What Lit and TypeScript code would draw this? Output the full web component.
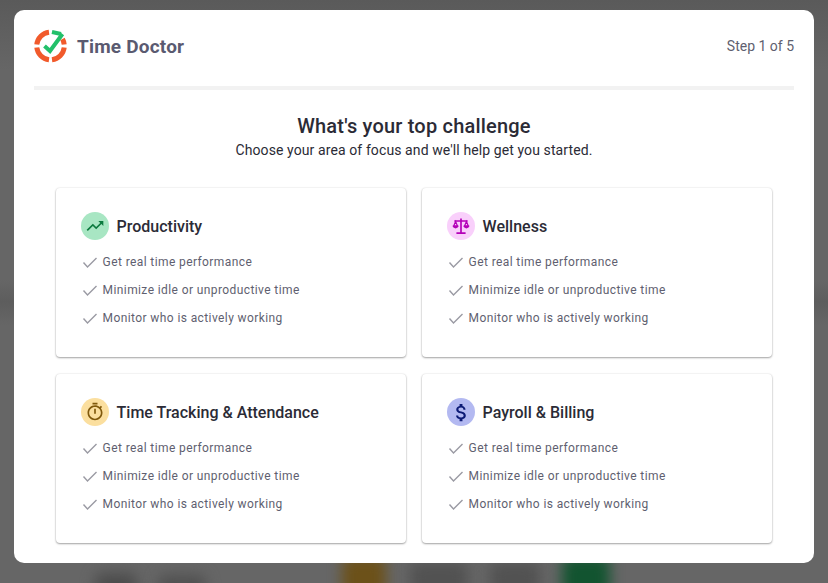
import { LitElement, html, css, svg } from 'lit'
import { customElement } from 'lit/decorators.js'

const points = ['Get real time performance', 'Minimize idle or unproductive time', 'Monitor who is actively working']

const icons = {
  trend: svg`<path d="M16 6l2.290 2.290-4.880 4.880-4-4L2 16.590 3.410 18l6-6 4 4 6.300-6.290L22 12V6z"/>`,
  scale: svg`<path d="M12 3v17M6.500 20.500h11M4 6h16" fill="none" stroke="currentColor" stroke-width="2"/><path d="M5.500 6.500L3.200 12h4.600zM18.500 6.500L16.200 12h4.600z" fill="none" stroke="currentColor" stroke-width="1.500"/><path d="M2 11.500h7c0 2-1.500 3.400-3.500 3.400S2 13.500 2 11.500zM15 11.500h7c0 2-1.500 3.400-3.500 3.400S15 13.500 15 11.500z"/>`,
  timer: svg`<path d="M15 1H9v2h6V1zm4.030 6.390l1.420-1.420c-.43-.51-.9-.99-1.410-1.410l-1.420 1.420C16.070 4.740 14.120 4 12 4c-4.970 0-9 4.030-9 9s4.020 9 9 9 9-4.030 9-9c0-2.120-.74-4.070-1.970-5.610zM12 20c-3.870 0-7-3.130-7-7s3.130-7 7-7 7 3.130 7 7-3.130 7-7 7zm-1-12h2v6h-2z"/>`,
  dollar: svg`<path d="M11.800 10.900c-2.270-.59-3-1.200-3-2.150 0-1.090 1.010-1.850 2.700-1.850 1.780 0 2.440.85 2.500 2.100h2.210c-.07-1.720-1.120-3.300-3.210-3.810V3h-3v2.160c-1.940.42-3.500 1.680-3.500 3.610 0 2.310 1.910 3.460 4.700 4.130 2.500.6 3 1.480 3 2.410 0 .69-.49 1.790-2.700 1.790-2.060 0-2.870-.92-2.980-2.100h-2.200c.12 2.190 1.760 3.420 3.680 3.830V21h3v-2.150c1.950-.37 3.500-1.500 3.500-3.550 0-2.840-2.430-3.810-4.700-4.400z"/>`,
}

const cards = [
  { title: 'Productivity', icon: icons.trend, bg: '#a8e6c3', fg: '#0c7a3e', size: 20 },
  { title: 'Wellness', icon: icons.scale, bg: '#f9d0fb', fg: '#b400b8', size: 20 },
  { title: 'Time Tracking & Attendance', icon: icons.timer, bg: '#fbdf9f', fg: '#80590c', size: 20 },
  { title: 'Payroll & Billing', icon: icons.dollar, bg: '#b3b9f1', fg: '#0c1a75', size: 23 },
]

const smears = [
  { left: 95, width: 42, top: 573, color: '#4c4c4c' },
  { left: 158, width: 48, top: 575, color: '#505050' },
  { left: 342, width: 44, top: 556, color: '#6c5119' },
  { left: 410, width: 58, top: 562, color: '#525252' },
  { left: 490, width: 50, top: 562, color: '#525252' },
  { left: 562, width: 48, top: 556, color: '#125430' },
]

@customElement('app-root')
export class AppRoot extends LitElement {
  static styles = css`
    :host {
      display: block;
      font-family: Roboto, 'Liberation Sans', sans-serif;
    }
    .page {
      position: relative;
      height: 583px;
      box-sizing: border-box;
      padding: 10px 14px 20px;
      overflow: hidden;
      background: linear-gradient(#5a5a5a 0, #666 70px, #666 280px, #5d5d5d 302px, #666 325px);
    }
    .smear {
      position: absolute;
      height: 44px;
      border-radius: 8px;
      filter: blur(7px);
    }
    .modal {
      position: relative;
      height: 553px;
      box-sizing: border-box;
      padding: 0 20px;
      background: #fff;
      border-radius: 10px;
    }
    header {
      display: flex;
      align-items: center;
      justify-content: space-between;
      height: 72px;
      padding-bottom: 4px;
      border-bottom: 4px solid #f2f2f2;
      box-sizing: content-box;
    }
    .brand {
      display: flex;
      align-items: center;
      gap: 10px;
      font-size: 19px;
      font-weight: 700;
      color: #5a5a70;
      letter-spacing: 0.2px;
    }
    .step {
      font-size: 14px;
      color: #5f5f70;
    }
    .intro {
      text-align: center;
      padding-top: 24px;
    }
    h1 {
      margin: 0;
      font-size: 20px;
      line-height: 24px;
      font-weight: 500;
      letter-spacing: 0.2px;
      color: #2b2b36;
    }
    .intro p {
      margin: 2px 0 0;
      font-size: 14px;
      line-height: 20px;
      letter-spacing: 0.1px;
      color: #2b2b36;
    }
    .grid {
      display: grid;
      grid-template-columns: 350px 350px;
      grid-auto-rows: 169px;
      column-gap: 16px;
      row-gap: 17px;
      margin: 28px 0 0 22px;
    }
    .card {
      box-sizing: border-box;
      padding: 24px 24px 0 25px;
      border-radius: 4px;
      background: #fff;
      box-shadow: 0 1px 2px rgba(0, 0, 0, 0.34), 0 0 2px rgba(0, 0, 0, 0.12);
    }
    .head {
      display: flex;
      align-items: center;
      gap: 7.6px;
      margin-bottom: 8px;
    }
    .badge {
      display: grid;
      place-items: center;
      width: 28px;
      height: 28px;
      border-radius: 50%;
    }
    .badge svg {
      fill: currentColor;
    }
    h2 {
      margin: 0;
      padding-top: 1px;
      font-size: 16px;
      line-height: 27px;
      font-weight: 500;
      color: #2b2b36;
    }
    ul {
      margin: 0;
      padding: 0;
      list-style: none;
    }
    li {
      display: flex;
      align-items: center;
      gap: 4.6px;
      height: 28px;
      font-size: 12px;
      letter-spacing: 0.4px;
      color: #5f5f70;
    }
    li svg {
      width: 16px;
      height: 16px;
      margin-left: 1px;
      fill: none;
      stroke: #9a9aa3;
      stroke-width: 1.4;
    }
  `

  render() {
    return html`
      <div class="page">
        ${smears.map(
          (s) => html`<div
            class="smear"
            style="left:${s.left}px;width:${s.width}px;top:${s.top}px;background:${s.color}"
          ></div>`
        )}
        <div class="modal">
          <header>
            <div class="brand">
              <svg width="33" height="34" viewBox="0 0 33 34">
                <g fill="none" stroke="#f15a2b" stroke-width="5">
                  <path d="M15 3.200A14 14 0 0 0 2.800 15.500"/>
                  <path d="M2.800 18.500A14 14 0 0 0 15 30.800"/>
                  <path d="M18 30.800A14 14 0 0 0 30.200 18.500"/>
                  <path d="M30.200 15.500A14 14 0 0 0 28.500 10"/>
                </g>
                <path d="M18 3L27 5" fill="none" stroke="#22c06a" stroke-width="4"/>
                <path d="M10.500 17L16 22L28.500 5" fill="none" stroke="#22c06a" stroke-width="4"/>
              </svg>
              <span>Time Doctor</span>
            </div>
            <span class="step">Step 1 of 5</span>
          </header>
          <div class="intro">
            <h1>What's your top challenge</h1>
            <p>Choose your area of focus and we'll help get you started.</p>
          </div>
          <div class="grid">
            ${cards.map(
              (c) => html`
                <div class="card">
                  <div class="head">
                    <span class="badge" style="background:${c.bg};color:${c.fg}">
                      <svg width=${c.size} height=${c.size} viewBox="0 0 24 24">${c.icon}</svg>
                    </span>
                    <h2>${c.title}</h2>
                  </div>
                  <ul>
                    ${points.map(
                      (p) => html`<li>
                        <svg viewBox="0 0 16 16"><path d="M1.500 8.500L5.500 13L14.500 4"/></svg>${p}
                      </li>`
                    )}
                  </ul>
                </div>
              `
            )}
          </div>
        </div>
      </div>
    `
  }
}
